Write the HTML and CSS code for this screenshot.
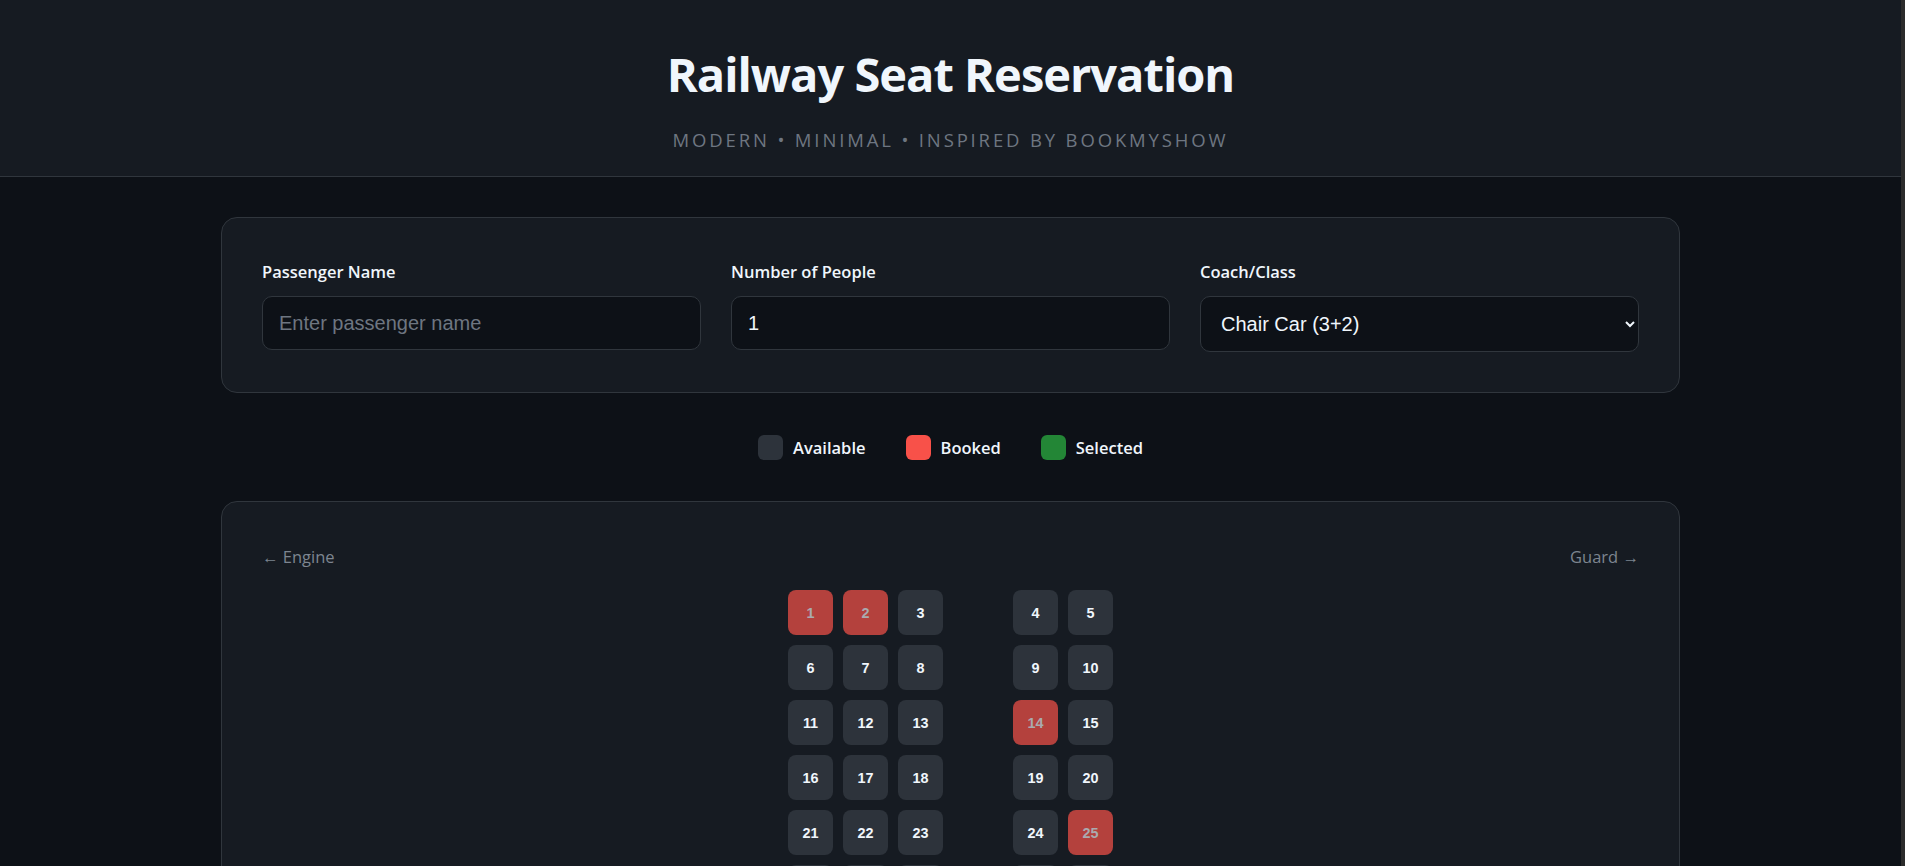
FILE: index.html
```html
<!DOCTYPE html>
<html lang="en">
<head>
<meta charset="utf-8">
<title>Railway Seat Reservation</title>
<link rel="stylesheet" href="styles.css">
</head>
<body>
<header class="site-header">
  <h1 class="title">Railway Seat Reservation</h1>
  <p class="subtitle">MODERN • MINIMAL • INSPIRED BY BOOKMYSHOW</p>
</header>

<main class="container">
  <section class="card form-card">
    <div class="field">
      <label class="field-label" for="pname">Passenger Name</label>
      <input class="control" id="pname" type="text" placeholder="Enter passenger name">
    </div>
    <div class="field">
      <label class="field-label" for="people">Number of People</label>
      <input class="control" id="people" type="number" value="1" min="1">
    </div>
    <div class="field">
      <label class="field-label" for="coach">Coach/Class</label>
      <select class="control control-select" id="coach">
        <option>Chair Car (3+2)</option>
        <option>Sleeper (3+3)</option>
        <option>AC 2 Tier (2+2)</option>
      </select>
    </div>
  </section>

  <div class="legend">
    <div class="legend-item"><span class="swatch swatch-available"></span>Available</div>
    <div class="legend-item"><span class="swatch swatch-booked"></span>Booked</div>
    <div class="legend-item"><span class="swatch swatch-selected"></span>Selected</div>
  </div>

  <section class="card coach-card">
    <div class="coach-ends">
      <span>← Engine</span>
      <span>Guard →</span>
    </div>
    <div class="seat-grid">
      <button class="seat booked">1</button><button class="seat booked">2</button><button class="seat">3</button><span class="aisle"></span><button class="seat">4</button><button class="seat">5</button>
      <button class="seat">6</button><button class="seat">7</button><button class="seat">8</button><span class="aisle"></span><button class="seat">9</button><button class="seat">10</button>
      <button class="seat">11</button><button class="seat">12</button><button class="seat">13</button><span class="aisle"></span><button class="seat booked">14</button><button class="seat">15</button>
      <button class="seat">16</button><button class="seat">17</button><button class="seat">18</button><span class="aisle"></span><button class="seat">19</button><button class="seat">20</button>
      <button class="seat">21</button><button class="seat">22</button><button class="seat">23</button><span class="aisle"></span><button class="seat">24</button><button class="seat booked">25</button>
      <button class="seat">26</button><button class="seat">27</button><button class="seat">28</button><span class="aisle"></span><button class="seat">29</button><button class="seat">30</button>
      <button class="seat">31</button><button class="seat booked">32</button><button class="seat">33</button><span class="aisle"></span><button class="seat">34</button><button class="seat">35</button>
      <button class="seat">36</button><button class="seat">37</button><button class="seat">38</button><span class="aisle"></span><button class="seat">39</button><button class="seat booked">40</button>
      <button class="seat">41</button><button class="seat">42</button><button class="seat">43</button><span class="aisle"></span><button class="seat">44</button><button class="seat">45</button>
      <button class="seat booked">46</button><button class="seat">47</button><button class="seat">48</button><span class="aisle"></span><button class="seat">49</button><button class="seat">50</button>
    </div>
  </section>
</main>
</body>
</html>
```

FILE: styles.css
```css
html {
  background: #0d1117;
}

body {
  margin: 0;
  background: #0d1117;
  border-right: 4px solid #2c2c2c;
  color: #e6edf3;
  font-family: "Open Sans", "Noto Sans", sans-serif;
}

.site-header {
  background: #161b22;
  border-bottom: 1px solid #30363d;
  text-align: center;
  padding: 45px 0 23px;
}

.title {
  margin: 0 0 23px;
  font-size: 47px;
  line-height: 59px;
  font-weight: 700;
  letter-spacing: -1px;
  color: #f0f6fc;
}

.subtitle {
  margin: 0;
  font-size: 18.5px;
  line-height: 26px;
  letter-spacing: 2.85px;
  color: #6e7681;
}

.container {
  width: 1459px;
  margin: 0 auto;
  padding: 40px 0 60px;
}

.card {
  background: #161b22;
  border: 1px solid #30363d;
  border-radius: 16px;
  padding: 40px;
}

.form-card {
  display: grid;
  grid-template-columns: repeat(3, 1fr);
  column-gap: 30px;
}

.field {
  display: flex;
  flex-direction: column;
}

.field-label {
  font-size: 16.5px;
  line-height: 28px;
  font-weight: 600;
  color: #f0f6fc;
  margin-bottom: 10px;
}

.control {
  box-sizing: border-box;
  height: 54px;
  width: 100%;
  background: #0d1117;
  border: 1px solid #30363d;
  border-radius: 10px;
  padding: 0 16px;
  color: #f0f6fc;
  font-family: "Liberation Sans", Arial, sans-serif;
  font-size: 20px;
  outline: none;
  color-scheme: dark;
}

.control::placeholder {
  color: #6e7681;
}

.control-select {
  height: 56px;
  padding: 0 12px 0 16px;
}

.legend {
  display: flex;
  justify-content: center;
  gap: 40px;
  margin: 42px 0 41px;
}

.legend-item {
  display: flex;
  align-items: center;
  gap: 10px;
  font-size: 16.5px;
  line-height: 24px;
  font-weight: 600;
  color: #f0f6fc;
}

.swatch {
  width: 25px;
  height: 25px;
  border-radius: 6px;
}

.swatch-available {
  background: #2d333b;
}

.swatch-booked {
  background: #f85149;
}

.swatch-selected {
  background: #238636;
}

.coach-ends {
  display: flex;
  justify-content: space-between;
  font-size: 16.5px;
  line-height: 30px;
  color: #7d8590;
  margin-bottom: 18px;
}

.seat-grid {
  display: grid;
  grid-template-columns: 45px 45px 45px 50px 45px 45px;
  grid-auto-rows: 45px;
  gap: 10px;
  justify-content: center;
}

.seat {
  border: 0;
  padding: 0;
  border-radius: 8px;
  background: #2d333b;
  color: #f0f6fc;
  font-family: "Liberation Sans", Arial, sans-serif;
  font-size: 14.4px;
  font-weight: 700;
  cursor: pointer;
}

.seat.booked {
  background: #b4413d;
  color: #aaaaae;
  cursor: not-allowed;
}
```
